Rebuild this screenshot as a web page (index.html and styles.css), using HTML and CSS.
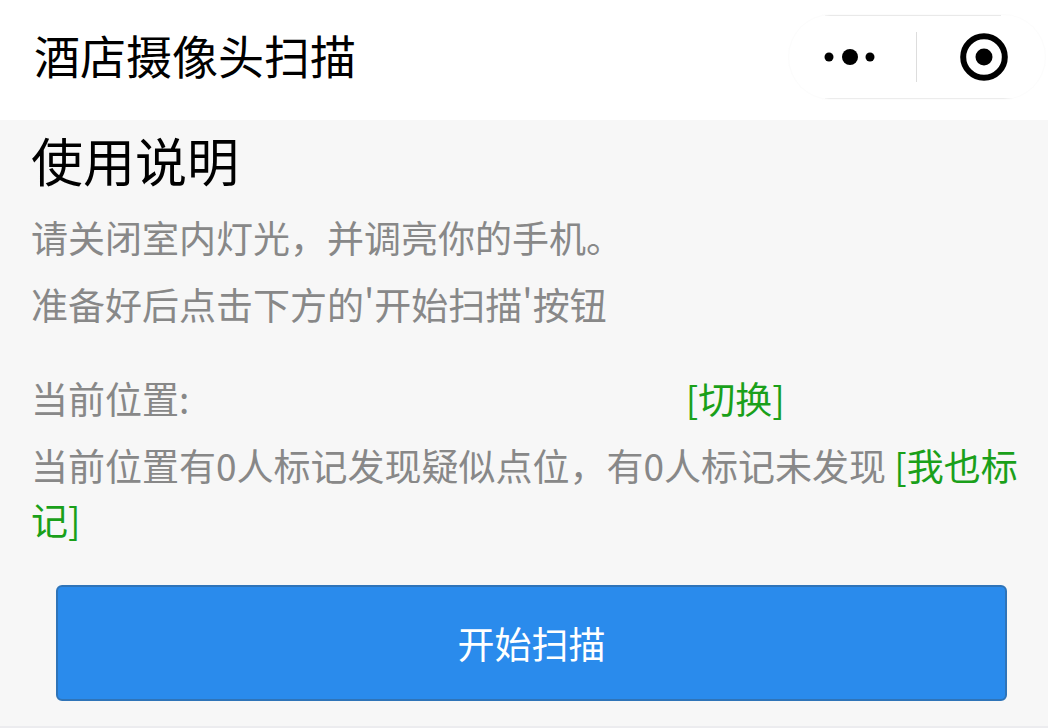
FILE: index.html
```html
<!DOCTYPE html>
<html lang="zh-CN">
<head>
  <meta charset="UTF-8">
  <meta name="viewport" content="width=device-width, initial-scale=1.0">
  <title>酒店摄像头扫描</title>
  <link rel="stylesheet" href="styles.css">
</head>
<body>
  <header class="navbar">
    <div class="navbar-title">酒店摄像头扫描</div>
    <div class="capsule">
      <button class="capsule-btn capsule-more" type="button" aria-label="更多">
        <svg width="52" height="18" viewBox="0 0 52 18">
          <circle cx="5" cy="9" r="4.5"/>
          <circle cx="26" cy="9" r="8"/>
          <circle cx="46" cy="9" r="4.5"/>
        </svg>
      </button>
      <span class="capsule-line"></span>
      <button class="capsule-btn capsule-close" type="button" aria-label="关闭">
        <svg width="48" height="48" viewBox="0 0 48 48">
          <circle cx="24" cy="24" r="20.8" fill="none" stroke="#000" stroke-width="6"/>
          <circle cx="24" cy="24" r="8.5"/>
        </svg>
      </button>
    </div>
  </header>

  <main class="page">
    <h1>使用说明</h1>
    <p>请关闭室内灯光，并调亮你的手机。</p>
    <p>准备好后点击下方的'开始扫描'按钮</p>

    <section class="location">
      <p class="location-row">
        <span class="location-label">当前位置:</span>
        <a href="#">[切换]</a>
      </p>
      <p>当前位置有0人标记发现疑似点位，有0人标记未发现 <a href="#">[我也标记]</a></p>
    </section>

    <button class="scan-btn" type="button">开始扫描</button>
  </main>
</body>
</html>
```
FILE: styles.css
```css
* {
  box-sizing: border-box;
}
body {
  margin: 0;
  background-color: #f7f7f7;
  font-family: "Noto Sans CJK SC", sans-serif;
  color: #000;
}
button {
  font-family: inherit;
  cursor: pointer;
}
.navbar {
  display: flex;
  justify-content: space-between;
  align-items: center;
  height: 120px;
  padding: 0 2px 6px 34px;
  background-color: #fff;
}
.navbar-title {
  padding-bottom: 6px;
  font-size: 46px;
  line-height: 60px;
}
.capsule {
  display: flex;
  align-items: center;
  width: 258px;
  height: 86px;
  border: 1px solid #fcfcfc;
  border-radius: 43px;
  background:
    linear-gradient(#e9e9e9, #e9e9e9) 36px 0 / 176px 1px no-repeat,
    linear-gradient(#ececec, #ececec) 36px 100% / 192px 1px no-repeat;
}
.capsule-btn {
  display: flex;
  flex: 1;
  justify-content: center;
  align-items: center;
  height: 100%;
  padding: 0;
  border: none;
  background: none;
}
.capsule-more {
  padding-right: 4px;
}
.capsule-close {
  padding-left: 6px;
}
.capsule-line {
  width: 1px;
  height: 50px;
  background-color: #ddd;
}
.page {
  padding: 2px 16px 25px 31px;
  border-bottom: 2px solid #ececef;
}
h1 {
  margin: 0 0 12px;
  font-size: 52px;
  font-weight: normal;
  line-height: 76px;
}
p {
  margin: 0 0 13px;
  font-size: 37px;
  line-height: 54px;
  color: #888;
}
a {
  color: #1aa01a;
  text-decoration: none;
}
.location {
  margin: 40px 0 39px;
}
.location p:last-child {
  margin-bottom: 0;
}
.location-row {
  display: flex;
  gap: 4px;
}
.location-label {
  width: 65%;
}
.scan-btn {
  display: block;
  width: 95%;
  height: 116px;
  margin: 0 auto;
  border: 2px solid #2f74b8;
  border-radius: 6px;
  background-color: #2a8bec;
  color: #fff;
  font-size: 37px;
}
```
